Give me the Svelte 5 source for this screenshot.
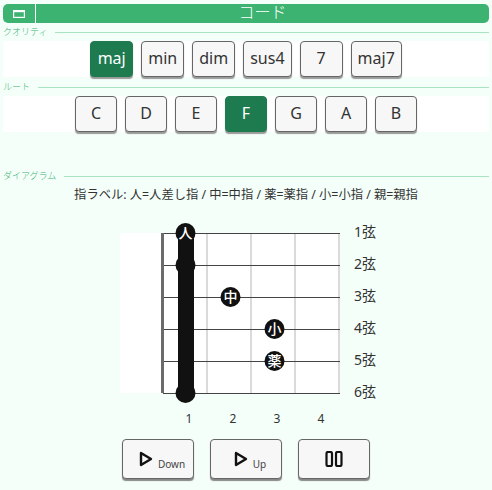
<script>
  const qualities = ['maj', 'min', 'dim', 'sus4', '7', 'maj7'];
  const roots = ['C', 'D', 'E', 'F', 'G', 'A', 'B'];
  let quality = $state('maj');
  let root = $state('F');

  const strY = [233, 265, 297, 329, 361, 393];
  const fretX = [207, 251, 295, 339];
  const dots = [
    { x: 185, y: 233, t: '人' },
    { x: 185, y: 265, t: '' },
    { x: 185, y: 393, t: '' },
    { x: 230, y: 297, t: '中' },
    { x: 274, y: 329, t: '小' },
    { x: 274, y: 361, t: '薬' }
  ];
</script>

<div class="page">
  <header class="bar">
    <button type="button" class="win" aria-label="window">
      <svg width="12" height="8" viewBox="0 0 12 8"><rect x="0.6" y="0.6" width="10.8" height="6.8" fill="none" stroke="#fff" stroke-width="1.2" /><rect x="0.6" y="0.6" width="10.8" height="1.6" fill="#fff" /></svg>
    </button>
    <span class="title">コード</span>
  </header>

  <div class="legend leg1"><span>クオリティ</span><i></i></div>
  <div class="card">
    {#each qualities as q (q)}
      <button type="button" class="key" class:on={quality === q} onclick={() => (quality = q)}>{q}</button>
    {/each}
  </div>

  <div class="legend leg2"><span>ルート</span><i></i></div>
  <div class="card">
    {#each roots as r (r)}
      <button type="button" class="key root" class:on={root === r} onclick={() => (root = r)}>{r}</button>
    {/each}
  </div>

  <div class="legend leg3"><span>ダイアグラム</span><i></i></div>
  <p class="hint">指ラベル: 人=人差し指 / 中=中指 / 薬=薬指 / 小=小指 / 親=親指</p>

  <svg class="diagram" width="492" height="210" viewBox="0 222 492 210">
    <rect x="120" y="233" width="220" height="160" fill="#fff" />
    {#each fretX as x}
      <line x1={x} x2={x} y1="233" y2="393" stroke="#b5b5b5" stroke-width="1" />
    {/each}
    {#each strY as y, i}
      <line x1="163" x2="340" y1={y + 0.5} y2={y + 0.5} stroke="#444" stroke-width="1" />
      <text x="354" y={y + 4} class="lbl">{i + 1}弦</text>
    {/each}
    <rect x="161" y="233" width="3" height="160" fill="#6b6b6b" />
    <rect x="178" y="233" width="16" height="160" fill="#111" />
    {#each dots as d}
      <circle cx={d.x + 0.5} cy={d.y} r="10" fill="#111" />
      {#if d.t}
        <text x={d.x + 0.5} y={d.y + 5} class="dot">{d.t}</text>
      {/if}
    {/each}
    {#each [189, 233, 277, 321] as x, i}
      <text x={x} y="423" class="num">{i + 1}</text>
    {/each}
  </svg>

  <div class="ctrl">
    <button type="button" class="play lab">
      <svg width="14" height="16" viewBox="0 0 14 16"><path d="M2 2 L12 8 L2 14 Z" fill="none" stroke="#111" stroke-width="2.4" stroke-linejoin="round" /></svg>
      <small>Down</small>
    </button>
    <button type="button" class="play lab">
      <svg width="14" height="16" viewBox="0 0 14 16"><path d="M2 2 L12 8 L2 14 Z" fill="none" stroke="#111" stroke-width="2.4" stroke-linejoin="round" /></svg>
      <small>Up</small>
    </button>
    <button type="button" class="play" aria-label="pause">
      <svg width="18" height="16" viewBox="0 0 18 16"><rect x="1.5" y="1" width="5.5" height="14" rx="1.5" fill="none" stroke="#111" stroke-width="2.2" /><rect x="11" y="1" width="5.5" height="14" rx="1.5" fill="none" stroke="#111" stroke-width="2.2" /></svg>
    </button>
  </div>
</div>

<style>
  :global(body) { background: #f5fffa; font-family: "Noto Sans", "Noto Sans CJK JP", sans-serif; color: #333; }
  .page { width: 492px; height: 490px; overflow: hidden; padding: 4px 3px 0; box-sizing: border-box; }
  .bar { height: 19px; background: #3cb371; border-radius: 5px; display: flex; align-items: center; }
  .win { width: 33px; height: 19px; padding: 0; border: none; border-right: 1px solid #fff; background: transparent; display: flex; align-items: center; justify-content: center; }
  .title { flex: 1; text-align: center; color: #fff; font-size: 16px; line-height: 19px; padding-bottom: 2px; font-weight: 300; }
  .legend { display: flex; align-items: center; gap: 8px; color: #3cb371; font-size: 9px; font-weight: 300; line-height: 12px; height: 12px; }
  .legend i { flex: 1; height: 1px; background: #a8e4c2; }
  .leg1 { margin: 3px 0 3px; }
  .leg2 { margin: 4px 0 3px; }
  .leg3 { margin-top: 38px; }
  .card { height: 36px; background: #fff; border-radius: 3px; display: flex; justify-content: center; gap: 8px; }
  .key { min-width: 43px; height: 36px; padding: 0 6px 3px; box-sizing: border-box; font: inherit; font-size: 16px; color: #333; background: #f7f7f7; border: 1px solid #666; border-radius: 4px; box-shadow: 0 2px 1px #999; }
  .key.root { min-width: 42px; width: 42px; }
  .key.on { background: #1e7b50; border-color: #1e7b50; color: #fff; }
  .hint { margin: 4px 0 0; font-size: 12.3px; line-height: 18px; text-align: center; color: #333; }
  .diagram { display: block; margin: 18px 0 0 -3px; }
  .lbl { font-size: 14px; fill: #333; }
  .num { font-size: 12px; fill: #333; text-anchor: middle; }
  .dot { font-size: 14px; fill: #fff; text-anchor: middle; font-weight: 500; }
  .ctrl { display: flex; gap: 16px; justify-content: center; margin-top: 7px; }
  .play { width: 72px; height: 40px; padding: 0; display: flex; align-items: center; justify-content: center; gap: 5px; background: #f7f7f7; border: 1px solid #666; border-radius: 4px; box-shadow: 0 2px 1px #888; font: inherit; }
  .play.lab { padding-left: 8px; }
  .play small { font-size: 10px; color: #444; margin-top: 10px; }
</style>
